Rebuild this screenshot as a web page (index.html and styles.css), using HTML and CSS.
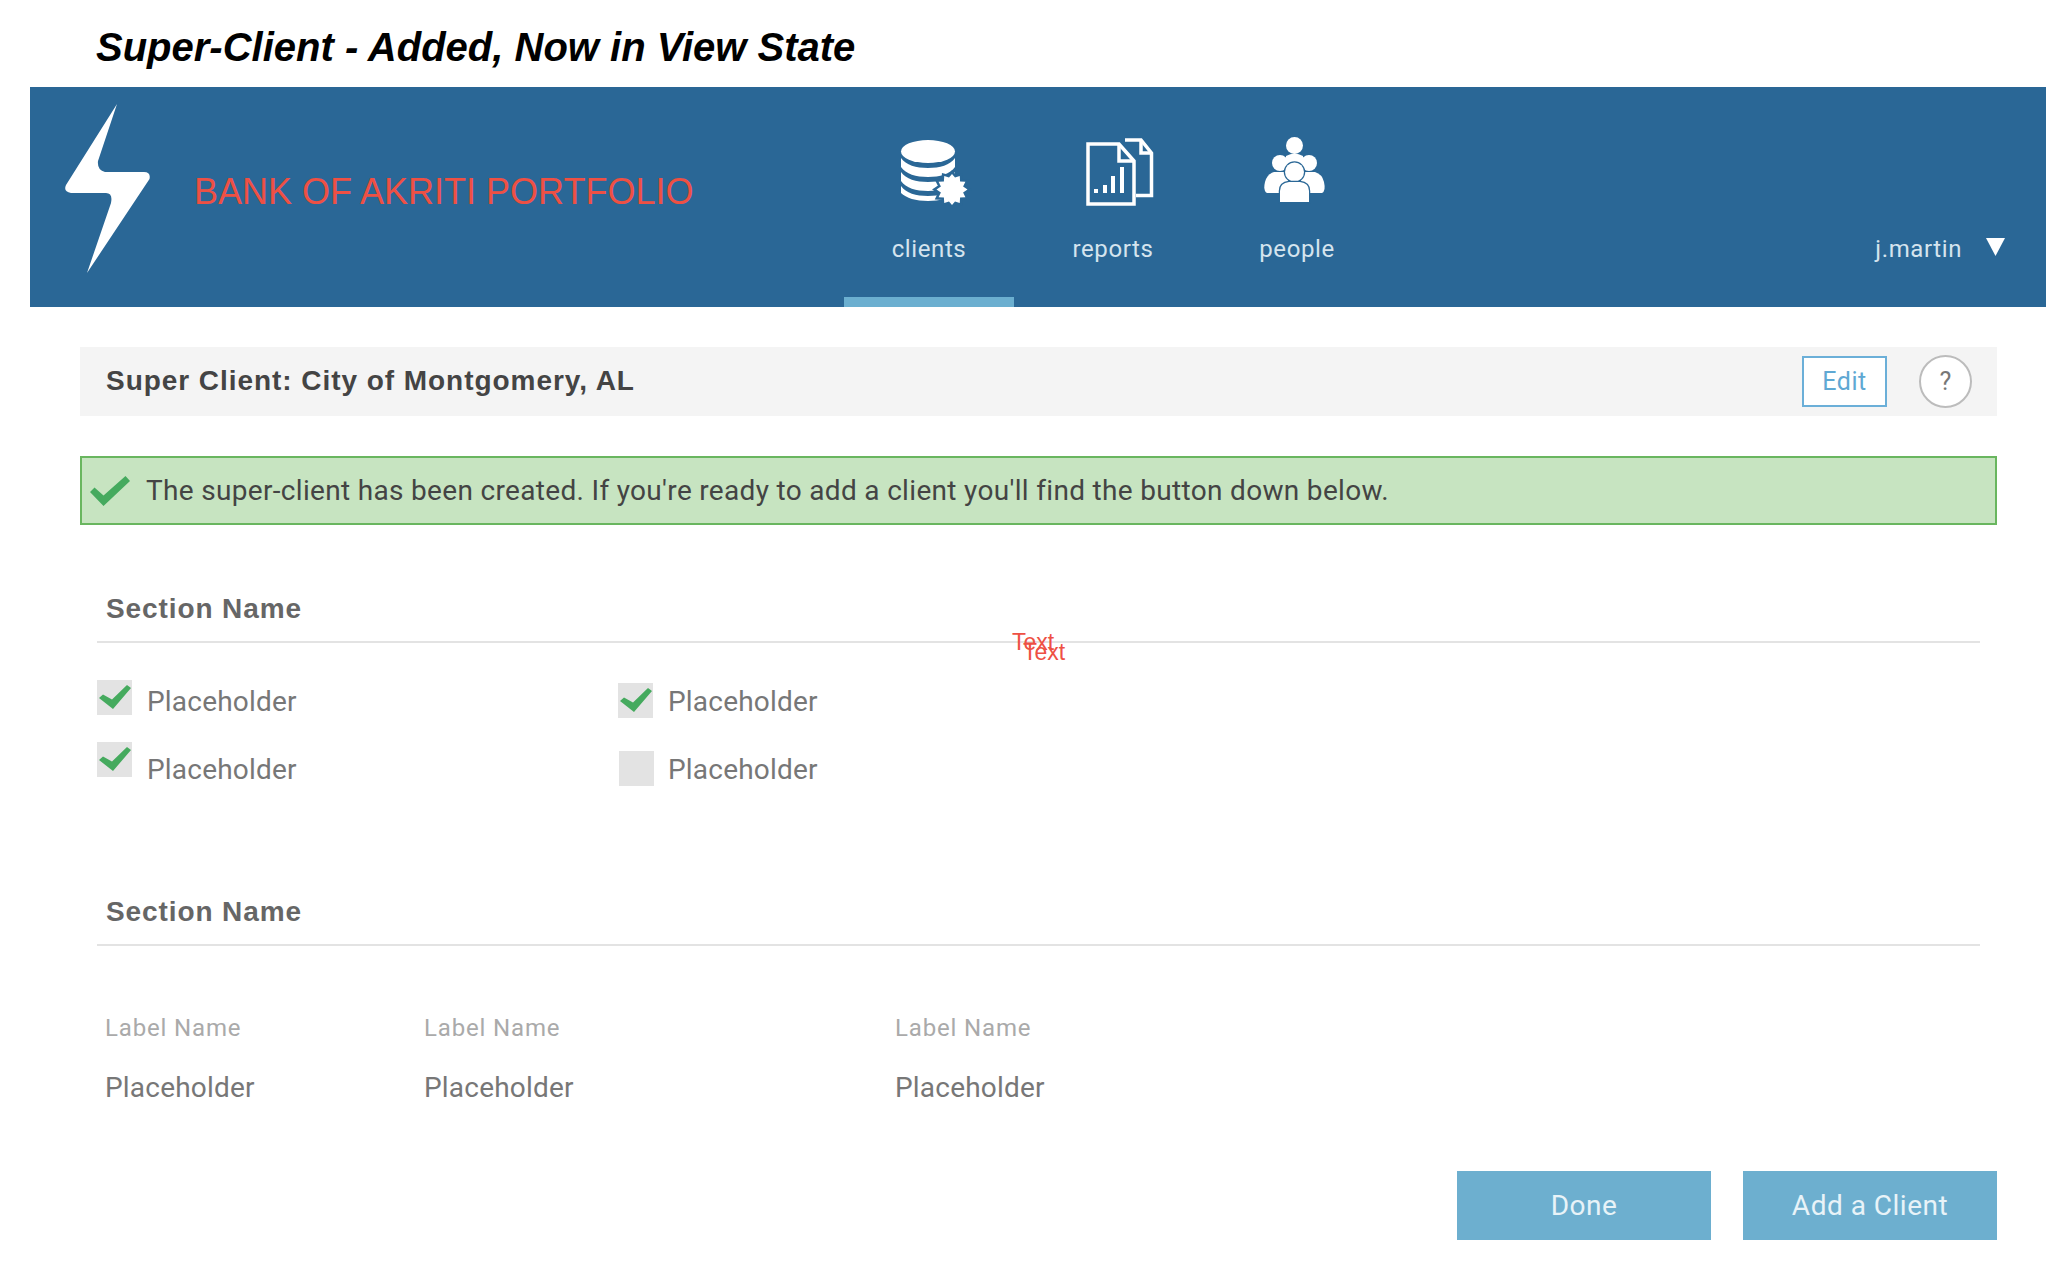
FILE: index.html
```html
<!DOCTYPE html>
<html lang="en">
<head>
<meta charset="utf-8">
<title>Super-Client</title>
<link rel="stylesheet" href="styles.css">
</head>
<body>
<svg class="defs" width="0" height="0" aria-hidden="true">
  <symbol id="tick" viewBox="0 0 40 30"><path d="M0 16 4.500 11.500 13.500 19.500 35.500 0 40 5 13.500 30Z"/></symbol>
  <symbol id="tick-narrow" viewBox="0 0 32 24"><path d="M0 13 4 9.500 13 14.500 28 0 32 3 14 24Z"/></symbol>
</svg>
<h1 class="page-title">Super-Client - Added, Now in View State</h1>
<header class="topbar">
  <div class="brand">
    <svg class="bolt" viewBox="0 0 85 169"><path d="M52 0 33 57Q32 66 40 68H79Q86 68 84.500 75L22 169 46 99Q48 89 41 89H6Q-2 88 1 81Z" fill="#fff"/></svg>
    <span class="brand-name">BANK OF AKRITI PORTFOLIO</span>
  </div>
  <nav class="tabs">
    <a class="tab tab-active">
      <svg class="tab-icon" viewBox="-5 -2 68 68" fill="#fff">
        <ellipse cx="28" cy="11.500" rx="27" ry="11.500"/>
        <path d="M1 18C6 25 16 28 28 28S50 25 55 18V27C50 34 40 37 28 37S6 34 1 27Z"/>
        <path d="M1 32C6 39 16 42 28 42S50 39 55 32V41C50 48 40 51 28 51S6 48 1 41Z"/>
        <path d="M1 46C6 53 16 56 28 56S50 53 55 46V52C50 58 40 61 28 61S6 58 1 53Z"/>
        <path class="gear" d="M67.500 49.500 63.100 52.500 65.400 57.250 60.100 57.600 59.750 62.900 55 61.600 52 65 49 61.600 44.250 62.900 43.900 57.600 38.600 57.250 40.900 52.500 36.500 49.500 40.900 46.500 38.600 41.750 43.900 41.400 44.250 36.100 49 37.400 52 34 55 37.400 59.750 36.100 60.100 41.400 65.400 41.750 63.100 46.500Z"/>
      </svg>
      <span class="tab-label">clients</span>
    </a>
    <a class="tab">
      <svg class="tab-icon" viewBox="-7 0 68 68" fill="none" stroke="#fff" stroke-width="3.500">
        <path d="M2 6H33L48 23V66H2Z"/>
        <path d="M33 6V23H48"/>
        <path d="M39 2H55L65.500 15V57.500H50"/>
        <path d="M55 2V15H65"/>
        <g fill="#fff" stroke="none"><rect x="8" y="51" width="4" height="4"/><rect x="17" y="47" width="4" height="8"/><rect x="25" y="38" width="4" height="17"/><rect x="34" y="29" width="4" height="26"/></g>
      </svg>
      <span class="tab-label">reports</span>
    </a>
    <a class="tab">
      <svg class="tab-icon" viewBox="-1 1 68 68" fill="#fff">
        <circle cx="30.500" cy="8.500" r="8.500"/>
        <path d="M22 19Q30.500 14 39 19V30H22Z"/>
        <circle cx="16" cy="26" r="8"/>
        <circle cx="45" cy="26" r="8"/>
        <path d="M3 56Q-1 54 1 45 3 37 10 35H24V56Z"/>
        <path d="M58 56Q62 54 60 45 58 37 51 35H37V56Z"/>
        <circle class="cut" cx="30.500" cy="35" r="9.500"/>
        <path class="cut" d="M16 65V54Q16 46 25 45H36Q45 46 45 54V65Z"/>
      </svg>
      <span class="tab-label">people</span>
    </a>
  </nav>
  <div class="user">
    <span class="user-name">j.martin</span>
    <svg class="caret" viewBox="0 0 18 17" preserveAspectRatio="none"><path d="M0 0H18L9 17Z" fill="#fff"/></svg>
  </div>
</header>
<main class="content">
  <div class="title-bar">
    <h2 class="client-name">Super Client: City of Montgomery, AL</h2>
    <button class="btn-edit">Edit</button>
    <span class="btn-help">?</span>
  </div>
  <div class="alert">
    <svg class="alert-tick"><use href="#tick"/></svg>
    <span>The super-client has been created. If you're ready to add a client you'll find the button down below.</span>
  </div>
  <section class="section section-first">
    <h3 class="section-title">Section Name</h3>
    <div class="note-anchor">
      <span class="note note-a">Text</span>
      <span class="note note-b">Text</span>
    </div>
    <div class="checks">
      <label class="check"><span class="box box-a"><svg class="box-tick"><use href="#tick-narrow"/></svg></span><span class="check-text">Placeholder</span></label>
      <label class="check"><span class="box box-b"><svg class="box-tick"><use href="#tick-narrow"/></svg></span><span class="check-text">Placeholder</span></label>
      <label class="check"><span class="box box-c"><svg class="box-tick"><use href="#tick-narrow"/></svg></span><span class="check-text">Placeholder</span></label>
      <label class="check"><span class="box box-d"></span><span class="check-text">Placeholder</span></label>
    </div>
  </section>
  <section class="section section-second">
    <h3 class="section-title">Section Name</h3>
    <div class="fields">
      <div class="field field-1"><div class="field-label">Label Name</div><div class="field-value">Placeholder</div></div>
      <div class="field field-2"><div class="field-label">Label Name</div><div class="field-value">Placeholder</div></div>
      <div class="field"><div class="field-label">Label Name</div><div class="field-value">Placeholder</div></div>
    </div>
  </section>
  <div class="actions">
    <button class="btn">Done</button>
    <button class="btn">Add a Client</button>
  </div>
</main>
</body>
</html>
```
FILE: styles.css
```css
* { box-sizing: border-box; }
html, body { margin: 0; height: 100%; overflow: hidden; background: #fff; }
body { font-family: Roboto, "Liberation Sans", sans-serif; color: #555; }
.defs { position: absolute; }

.page-title {
  margin: 0;
  height: 87px;
  padding: 25px 0 0 96px;
  font: italic bold 40px/44px "Liberation Sans", sans-serif;
  color: #000;
}

.topbar {
  margin-left: 30px;
  height: 220px;
  background: #2a6796;
  display: flex;
}
.brand { width: 814px; display: flex; align-items: center; padding: 0 0 17px 35px; }
.bolt { width: 85px; height: 169px; flex: none; }
.brand-name {
  margin-left: 44px;
  font: 36px/1 "Liberation Sans", sans-serif;
  color: #ee5044;
  padding-top: 7px;
}
.tabs { display: flex; gap: 14px; }
.tab {
  width: 170px;
  padding-top: 51px;
  display: flex;
  flex-direction: column;
  align-items: center;
  border-bottom: 10px solid transparent;
  color: #d5e4ee;
}
.tab-active { border-bottom-color: #6bafd0; }
.tab-icon { width: 68px; height: 68px; flex: none; overflow: visible; }
.tab-label { margin-top: 29px; font-size: 24px; line-height: 28px; letter-spacing: 0.6px; }
.gear { stroke: #2a6796; stroke-width: 5; paint-order: stroke; }
.cut { stroke: #2a6796; stroke-width: 2.500; paint-order: stroke; }

.user { margin-left: auto; padding: 150px 41px 0 0; display: flex; align-items: flex-start; gap: 24px; }
.user-name { font-size: 24px; line-height: 28px; letter-spacing: 0.6px; color: #d5e4ee; margin-top: -2px; }
.caret { width: 19px; height: 18px; margin-top: 1px; }

.content { padding: 40px 49px 0 80px; }

.title-bar {
  height: 69px;
  background: #f4f4f4;
  display: flex;
  align-items: center;
  padding: 0 25px 0 26px;
}
.client-name { margin: 0 0 2px; flex: 1; font: bold 28px/1 "Liberation Sans", sans-serif; color: #444; letter-spacing: 0.95px; }
.btn-edit {
  width: 85px;
  height: 51px;
  background: #fff;
  border: 2px solid #6bafd8;
  font: 25px Roboto, sans-serif;
  color: #5fa8d3;
  letter-spacing: 0.5px;
  padding: 0;
}
.btn-help {
  width: 53px;
  height: 53px;
  margin-left: 32px;
  border-radius: 50%;
  border: 2px solid #bcbcbc;
  background: #fff;
  display: flex;
  align-items: center;
  justify-content: center;
  font-size: 25px;
  color: #777;
}

.alert {
  margin-top: 40px;
  height: 69px;
  background: #c7e4c1;
  border: 2px solid #69b65f;
  display: flex;
  align-items: center;
  padding-left: 8px;
  font-size: 28px;
  letter-spacing: 0.32px;
  color: #444;
}
.alert-tick { width: 40px; height: 30px; fill: #45aa5e; margin-right: 16px; }
.alert > span { margin-top: -1px; }

.section { margin: 0 17px; }
.section-first { margin-top: 57px; }
.section-second { margin-top: 97px; }
.section-title {
  margin: 0;
  height: 61px;
  padding: 10px 0 0 9px;
  border-bottom: 2px solid #e3e3e3;
  font: bold 28px/34px "Liberation Sans", sans-serif;
  letter-spacing: 0.9px;
  color: #666;
}
.note-anchor { position: relative; height: 0; }
.note { position: absolute; font: 23px/1 "Liberation Sans", sans-serif; color: #ee5044; }
.note-a { left: 915px; top: -12px; }
.note-b { left: 926px; top: -2px; }

.checks { display: grid; grid-template-columns: 521px 521px; padding-top: 37px; row-gap: 28px; }
.check { display: flex; align-items: flex-start; font-size: 28px; line-height: 36px; letter-spacing: 0.2px; color: #777; }
.check-text { margin: 4px 0 0 15px; }
.box { width: 35px; height: 35px; background: #e3e3e3; flex: none; display: flex; align-items: flex-start; justify-content: center; padding-top: 5px; }
.box-b { margin-top: 3px; }
.box-c { margin-top: -6px; }
.box-d { margin: 3px -1px 0 1px; }
.box-tick { width: 32px; height: 24px; fill: #45aa5e; }

.fields { display: flex; padding: 68px 0 0 8px; }
.field-1 { width: 319px; }
.field-2 { width: 471px; }
.field-label { font-size: 24px; line-height: 28px; color: #aaa; letter-spacing: 0.85px; }
.field-value { margin-top: 29px; font-size: 28px; line-height: 34px; letter-spacing: 0.2px; color: #777; }

.actions { display: flex; justify-content: flex-end; gap: 32px; margin-top: 66px; }
.btn {
  width: 254px;
  height: 69px;
  background: #6dafcf;
  border: 0;
  font: 28px Roboto, sans-serif;
  color: #e8f3f8;
  letter-spacing: 0.5px;
  padding: 0;
}
```
